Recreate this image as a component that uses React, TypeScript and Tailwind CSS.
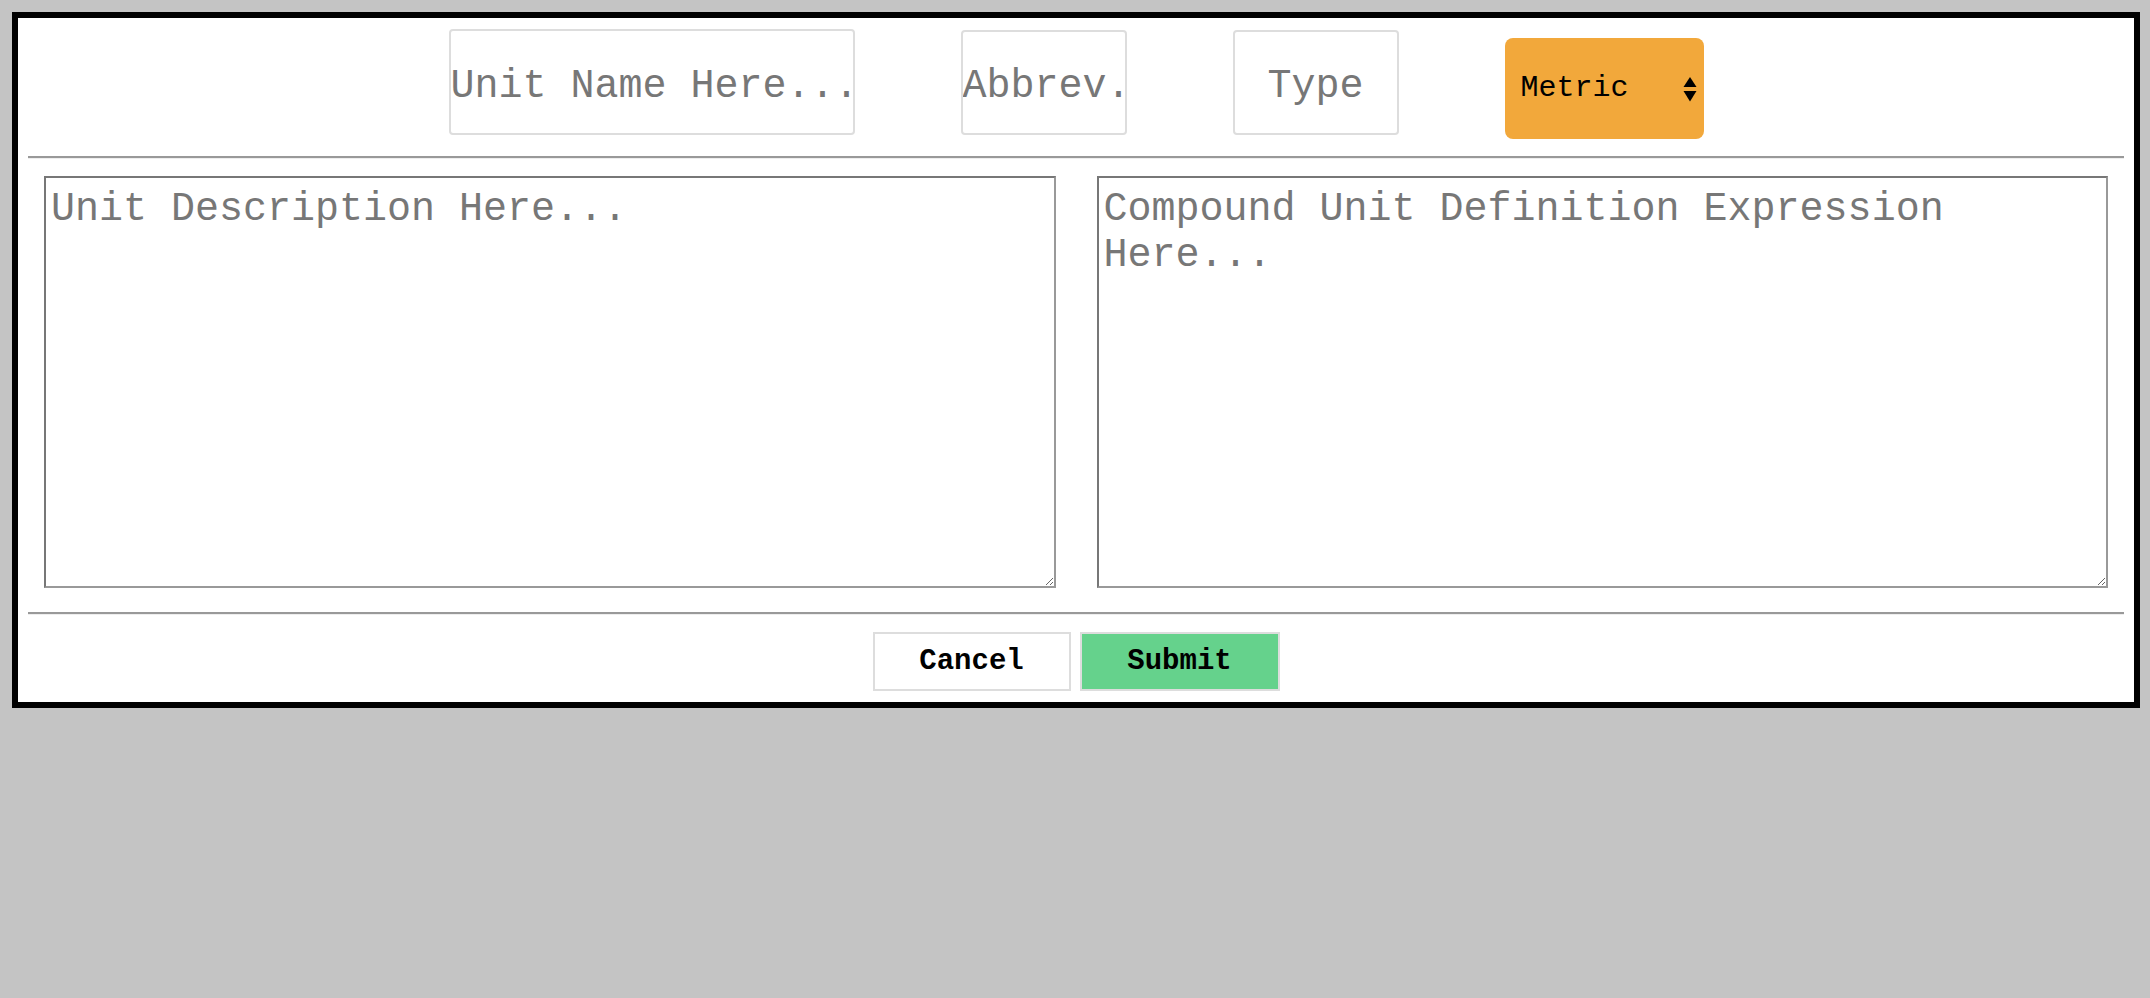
import React from 'react';

const mono = "font-['Liberation_Mono','Courier_New',monospace]";

function SelectArrows() {
  return (
    <svg width="14" height="26" viewBox="0 0 14 26" className="pointer-events-none absolute right-[7px] top-[39px]">
      <polygon points="7,0 13.5,10 0.5,10" fill="#000" />
      <polygon points="0.5,14 13.5,14 7,24.5" fill="#000" />
    </svg>
  );
}

export default function App() {
  return (
    <div className={`min-h-screen w-full bg-[#c4c4c4] pt-[12px] pl-[12px] ${mono}`}>
      <div className="flex h-[696px] w-[2128px] flex-col border-[6px] border-black bg-white">
        {/* top row */}
        <div className="flex h-[128px] items-start justify-center gap-[106px] pt-[11px]">
          <input
            placeholder="Unit Name Here..."
            className="h-[106px] w-[406px] rounded-[4px] border-2 border-[#dddddd] bg-white px-0 pt-[8px] pb-0 text-[40px] text-[#777] placeholder:text-[#777] outline-none"
          />
          <input
            placeholder="Abbrev."
            className="mt-px h-[105px] w-[166px] rounded-[4px] border-2 border-[#dddddd] bg-white px-0 pt-[8px] pb-0 text-[40px] text-[#777] placeholder:text-[#777] outline-none"
          />
          <input
            placeholder="Type"
            className="mt-px h-[105px] w-[166px] rounded-[4px] border-2 border-[#dddddd] bg-white px-0 pt-[8px] pb-0 text-center text-[40px] text-[#777] placeholder:text-[#777] outline-none"
          />
          <div className="relative mt-[9px] h-[101px]">
            <select className="block h-[101px] w-[199px] appearance-none rounded-[8px] border-0 bg-[#f2a83b] pl-[16px] text-[30px] text-black outline-none">
              <option>Metric</option>
              <option>Imperial</option>
            </select>
            <SelectArrows />
          </div>
        </div>

        <div className="mx-[10px] mt-[10px] border-t-2 border-b border-t-[#999] border-b-[#eee]" />

        {/* text areas */}
        <div className="mt-[17px] flex gap-[41px] px-[26px]">
          <textarea
            placeholder="Unit Description Here..."
            className="block h-[412px] flex-1 border-2 border-t-[#777] border-l-[#777] border-r-[#999] border-b-[#999] px-[5px] pt-[9px] pb-[6px] text-[40px] leading-[46px] text-[#777] placeholder:text-[#777] outline-none"
          />
          <textarea
            placeholder="Compound Unit Definition Expression Here..."
            className="block h-[412px] flex-1 border-2 border-t-[#777] border-l-[#777] border-r-[#999] border-b-[#999] px-[5px] pt-[9px] pb-[6px] text-[40px] leading-[46px] text-[#777] placeholder:text-[#777] outline-none"
          />
        </div>

        <div className="mx-[10px] mt-[24px] border-t-2 border-b border-t-[#999] border-b-[#eee]" />

        {/* buttons */}
        <div className="mt-[17px] flex justify-center gap-[9px]">
          <button className="h-[59px] w-[198px] border-2 border-[#dddddd] bg-white text-[29px] font-bold text-black">
            Cancel
          </button>
          <button className="h-[59px] w-[200px] border-2 border-[#dddddd] bg-[#65d28c] text-[29px] font-bold text-black">
            Submit
          </button>
        </div>
      </div>
    </div>
  );
}
